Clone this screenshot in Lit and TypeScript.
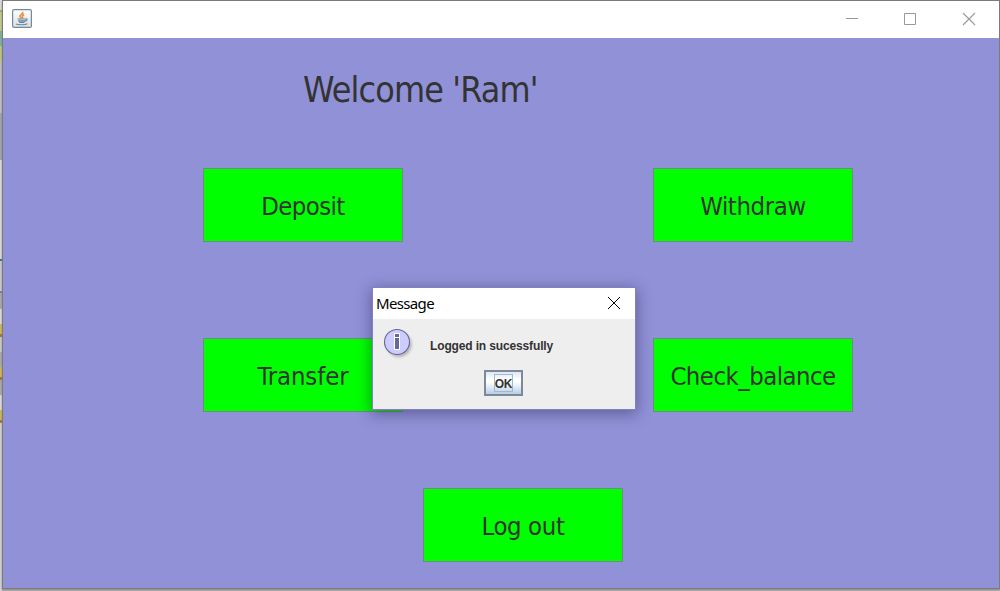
import { LitElement, html, css } from "lit";
import { customElement, property } from "lit/decorators.js";

@customElement("menu-button")
class MenuButton extends LitElement {
  @property() label = "";
  static styles = css`
    :host { display: block; width: 200px; height: 74px; }
    button { box-sizing: border-box; display: flex; align-items: center; justify-content: center; width: 200px; height: 74px; padding: 2px 0 0; border: 1px solid #6f8a80; border-radius: 0; background: #00ff00; color: #333; font: 25.5px "DejaVu Sans Condensed", "DejaVu Sans", sans-serif; font-stretch: condensed; letter-spacing: var(--track, 0); white-space: nowrap; }
  `;
  render() { return html`<button>${this.label}</button>`; }
}

@customElement("message-dialog")
class MessageDialog extends LitElement {
  static styles = css`
    :host { display: block; box-sizing: border-box; width: 264px; height: 123px; border: 1px solid #8080c4; background: #eee; box-shadow: 0 3px 14px 1px rgba(20,20,60,.4); }
    .head { box-sizing: border-box; height: 31px; display: flex; justify-content: space-between; align-items: center; background: #fff; padding: 0 14px 1px 3px; color: #000; font: 15px "Noto Sans", sans-serif; }
    .title { letter-spacing: -0.65px; }
    .body { display: flex; height: 51px; color: #333; font: bold 12px "Liberation Sans", sans-serif; }
    .info { display: block; margin: 8px 0 0 9px; }
    .text { margin: 20px 0 0 14px; line-height: 14px; letter-spacing: -.14px; }
    .foot { display: flex; justify-content: center; padding-right: 2px; }
    .ok { box-sizing: border-box; width: 39px; height: 26px; padding: 2px; border: 2px solid #7a8a99; border-radius: 0; background: linear-gradient(#dde8f3 0, #fff 35%, #fff 45%, #b8cfe5 100%); display: flex; justify-content: center; color: #333; font: bold 12px/18px "Liberation Sans", sans-serif; }
    .focus { box-sizing: border-box; width: 19px; height: 18px; border: 1px solid #a3b8cc; display: flex; justify-content: center; letter-spacing: -.3px; padding-left: 1px; }
  `;
  render() {
    return html`
      <div class="head"><span class="title">Message</span>
        <svg width="14" height="14" viewBox="0 0 14 14"><path d="M1 1L13 13M13 1L1 13" stroke="#000" stroke-width="1"/></svg>
      </div>
      <div class="body">
        <svg class="info" width="34" height="34" viewBox="0 0 34 34">
          <defs><filter id="blur"><feGaussianBlur stdDeviation="1.4"/></filter></defs>
          <circle cx="17" cy="17.500" r="12.5" fill="#888" opacity=".6" filter="url(#blur)"/>
          <circle cx="15" cy="15" r="12.500" fill="#ccccff" stroke="#666699" stroke-width="1.1"/>
          <path d="M12 6h6v17h-6z" fill="#fff"/>
          <path d="M13 7h4v3h-4zM13 11h4v11h-4z" fill="#666699"/>
        </svg>
        <span class="text">Logged in sucessfully</span>
      </div>
      <div class="foot"><button class="ok"><span class="focus">OK</span></button></div>`;
  }
}

@customElement("app-root")
class AppRoot extends LitElement {
  static styles = css`
    :host { display: flex; position: relative; width: 1000px; height: 591px; overflow: hidden; background: #b5b5b5; }
    .behind { width: 2px; background: linear-gradient(#ddd 0 10px, #9caf62 10px 12px, #c7cc88 12px 31px, #78b59a 31px 46px, #c5c878 46px 61px, #c2c2c4 61px 113px, #a0a5af 113px 160px, #ddd 160px 259px, #357080 259px 261px, #ccc 261px 291px, #77b 291px 293px, #aaa 293px 309px, #ddd 309px 324px, #d5b947 324px 334px, #b86b30 334px 337px, #ccc 337px 352px, #aaa 352px 367px, #d5b947 367px 377px, #b86b30 377px 380px, #aaa 380px 395px, #ddd 395px 410px, #d5b947 410px 420px, #b86b30 420px 423px, #d4d4d4 423px); }
    .window { box-sizing: border-box; width: 998px; height: 589px; border: 1px solid #7b7b7b; background: #9191d8; box-shadow: 0 1px 2px #888; }
    .bar { display: flex; height: 37px; background: #fff; justify-content: space-between; padding: 0 23px 0 9px; }
    .java { margin-top: 8px; }
    .controls { display: flex; gap: 45px; padding-top: 11px; }
    h1 { margin: 0; padding: 29px 0 0 300px; height: 101px; color: #333; font: 35.5px/46px "DejaVu Sans Condensed", "DejaVu Sans", sans-serif; font-stretch: condensed; letter-spacing: -.84px; white-space: nowrap; }
    .grid { display: grid; grid-template-columns: 200px 200px; column-gap: 250px; row-gap: 96px; padding-left: 200px; }
    .last { padding: 76px 0 0 420px; }
    .overlay { position: absolute; left: 372px; top: 287px; }
    .deposit { --track: -.6px; } .withdraw { --track: -.4px; } .transfer { --track: -.1px; } .check { --track: -.55px; } .logout { --track: -.4px; }
  `;
  render() {
    return html`
      <div class="behind"></div>
      <div class="window">
        <div class="bar">
          <svg class="java" width="20" height="19" viewBox="0 0 20 19">
            <defs><linearGradient id="g" x2="0" y2="1"><stop stop-color="#fff"/><stop offset="1" stop-color="#dedede"/></linearGradient></defs>
            <rect x=".6" y=".6" width="18.8" height="17.8" rx="1.5" fill="url(#g)" stroke="#6f8ba0" stroke-width="1.2"/>
            <path d="M10.500 3c1.500 2-3 2.500-2.500 4.500 .2 1 1.500 1.500 1.500 2M12 5.500c-3 1.500-1 2.500-1.500 4" fill="none" stroke="#ed8d45" stroke-width="1.700"/>
            <path d="M5.500 10h8M6 11.800h7.500M7 13.300h5.500M13.500 10c2.500-.5 2 2-1 2.500M4 15c2 1 9 1 11.500-.2" fill="none" stroke="#6487a3" stroke-width="1.200"/>
          </svg>
          <div class="controls">
            <svg width="14" height="14" viewBox="0 0 14 14"><path d="M2 6.500h12" stroke="#999"/></svg>
            <svg width="14" height="14" viewBox="0 0 14 14"><path d="M1.500 1.500h11v11h-11z" fill="none" stroke="#999"/></svg>
            <svg width="14" height="14" viewBox="0 0 14 14"><path d="M1 1L13 13M13 1L1 13" stroke="#999" stroke-width="1.100"/></svg>
          </div>
        </div>
        <h1>Welcome 'Ram'</h1>
        <div class="grid">
          <menu-button class="deposit" label="Deposit"></menu-button>
          <menu-button class="withdraw" label="Withdraw"></menu-button>
          <menu-button class="transfer" label="Transfer"></menu-button>
          <menu-button class="check" label="Check_balance"></menu-button>
        </div>
        <div class="last"><menu-button class="logout" label="Log out"></menu-button></div>
      </div>
      <message-dialog class="overlay"></message-dialog>`;
  }
}
